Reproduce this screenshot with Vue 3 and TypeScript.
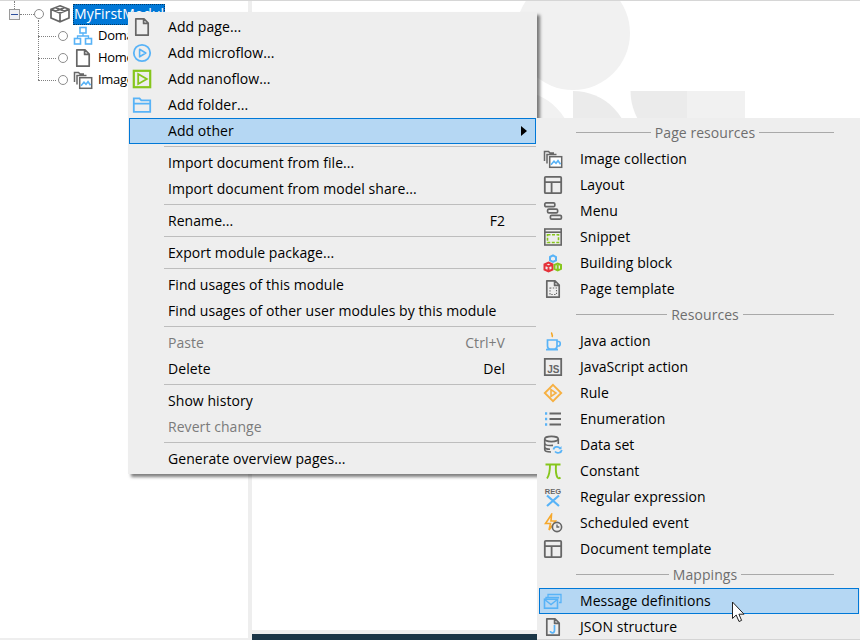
<script setup lang="ts">
type Row = { label?: string; icon?: string; key?: string; off?: boolean; hot?: boolean; arrow?: boolean; sep?: boolean; head?: string };

const g = '#666666';
const b = '#58b3f7';
const page = `<path d="M3.8 1.8H12L16.2 6V18.2H3.8Z M11.6 2V6.4H16" fill="none" stroke="${g}" stroke-width="1.7" stroke-linejoin="round"/>`;
const layout = `<rect x="1.8" y="1.8" width="16.4" height="16.4" rx="1" fill="none" stroke="${g}" stroke-width="1.8"/><path d="M2 7.2H18M8.6 7.2V18" stroke="${g}" stroke-width="1.8" fill="none"/>`;
const images = `<path d="M1.5 12V2.5H5.5L7 4H11M4 14.5V5.5H13.5" fill="none" stroke="${g}" stroke-width="1.5"/><rect x="6.7" y="7.7" width="12" height="10.6" fill="#fff" stroke="${g}" stroke-width="1.5"/><path d="M8 15.7L11 12.2L13 14.2L15 11.7L17.5 15.2" fill="none" stroke="${b}" stroke-width="1.6"/>`;
const icons: Record<string, string> = {
  page,
  layout,
  images,
  microflow: `<circle cx="10" cy="10" r="8.2" fill="none" stroke="${b}" stroke-width="1.8"/><path d="M7.6 6.2L13.8 10L7.6 13.8Z" fill="none" stroke="${b}" stroke-width="1.6" stroke-linejoin="round"/>`,
  nanoflow: `<rect x="1.8" y="1.8" width="16.4" height="16.4" fill="none" stroke="#86c61c" stroke-width="2.2"/><path d="M6.2 5L14.8 10L6.2 15Z" fill="none" stroke="#86c61c" stroke-width="1.8"/>`,
  folder: `<path d="M1.8 16.8V3.4H7.5L9.3 5.4H18.2V16.8Z M2 8.6H18" fill="none" stroke="${b}" stroke-width="1.8"/>`,
  menu: `<rect x="1.8" y="1.9" width="10" height="3.8" rx="1.2" fill="none" stroke="${g}" stroke-width="1.7"/><rect x="4.6" y="8.1" width="10" height="3.8" rx="1.2" fill="none" stroke="${g}" stroke-width="1.7"/><rect x="7.4" y="14.3" width="11" height="3.8" rx="1.2" fill="none" stroke="${g}" stroke-width="1.7"/>`,
  snippet: `<rect x="1.8" y="2" width="16.4" height="16" fill="none" stroke="${g}" stroke-width="1.6"/><path d="M2 5.2H18" stroke="${g}" stroke-width="1.6"/><rect x="4.5" y="7.7" width="11" height="7.8" fill="none" stroke="#86c61c" stroke-width="1.6" stroke-dasharray="3 1.5"/>`,
  block: `<path d="M7 4L10 2.4L13 4V7.5L10 9L7 7.5Z" fill="none" stroke="${b}" stroke-width="2"/><path d="M1.5 11.5L5.5 9.6L9.5 11.5V16.5L5.5 18.4L1.5 16.5ZM1.5 11.7L5.5 13.5L9.5 11.7M5.5 13.5V18" fill="none" stroke="#e5323a" stroke-width="2"/><path d="M11.5 12L14.7 10.5L18 12V15.8L14.7 17.3L11.5 15.8ZM14.7 12V17" fill="none" stroke="#86c61c" stroke-width="2"/>`,
  template: `${page}<rect x="7" y="9" width="6.5" height="6.5" fill="none" stroke="${g}" stroke-width="1.1" stroke-dasharray="1.4 1.4"/>`,
  java: `<path d="M9 1.5C7.5 3 10.5 3.8 9 6" fill="none" stroke="#f5a623" stroke-width="1.6"/><path d="M4.5 9H14V15C14 17 13 18 11.5 18H7C5.5 18 4.5 17 4.5 15Z M14 10.5H15.5C17.8 10.5 17.8 15 15.5 15H14 M3 18.7H15" fill="none" stroke="${b}" stroke-width="1.7"/>`,
  js: `<path d="M1.8 1.8H18.2V18.2H1.8Z" fill="none" stroke="${g}" stroke-width="1.8"/><text x="16.5" y="16" text-anchor="end" font-family="Liberation Sans" font-weight="700" font-size="10" fill="${g}">JS</text>`,
  rule: `<path d="M10 1.8L18.2 10L10 18.2L1.8 10Z" fill="none" stroke="#f6b042" stroke-width="1.9"/><path d="M8 6.6L13 10L8 13.4Z" fill="none" stroke="#f6b042" stroke-width="1.6"/>`,
  enum: `<path d="M2 4.5H4.2M2 10H4.2M2 15.5H4.2" stroke="${b}" stroke-width="2.4" fill="none"/><path d="M6.5 4.5H18M6.5 10H18M6.5 15.5H18" stroke="${g}" stroke-width="1.8" fill="none"/>`,
  dataset: `<ellipse cx="8.5" cy="4" rx="6.8" ry="2.6" fill="none" stroke="${g}" stroke-width="1.6"/><path d="M1.7 4V14.5C1.7 16 4.5 17 8 17M1.7 8C2 10 6 10.8 10 10.4M1.7 12C2 13.6 4.5 14.3 7 14.3M15.3 4V9" fill="none" stroke="${g}" stroke-width="1.6"/><path d="M10.5 14.5C11 11.5 15.5 11 17 13.5M18.8 15C18.3 18 14 18.8 12 16.5" fill="none" stroke="${b}" stroke-width="1.7"/><path d="M18.5 11V14.2H15.5Z" fill="${b}"/>`,
  constant: `<path d="M2.5 3.5H17.5M7 3.5C7 9 6.5 14 4 17.5M13 3.5C12.6 9 13 14 14.5 16.5C15.3 17.6 16.5 17.3 17.5 16.5" fill="none" stroke="#86c61c" stroke-width="1.9"/>`,
  regex: `<text x="10" y="6.6" text-anchor="middle" font-family="Liberation Sans" font-weight="700" font-size="7.5" fill="${g}">REG</text><path d="M4 8.5L16 19M16 8.5L4 19" stroke="${b}" stroke-width="2.2" fill="none"/>`,
  event: `<path d="M8.5 1.5L2.5 10.5H7.5L6 17L12.5 8H8L8.5 1.5Z" fill="none" stroke="#f6a92e" stroke-width="1.6"/><circle cx="14" cy="14" r="4.6" fill="#eee" stroke="${g}" stroke-width="1.6"/><path d="M14 11.5V14H16.3" fill="none" stroke="${g}" stroke-width="1.3"/>`,
  message: `<path d="M5 6V3.5H18V11.5H16M3 9V6.5H15.5V7.5" fill="none" stroke="${b}" stroke-width="1.3"/><rect x="1.5" y="8.2" width="13" height="9" fill="none" stroke="${b}" stroke-width="1.6"/><path d="M2 8.8L8 13.5L14 8.8" fill="none" stroke="${b}" stroke-width="1.4"/>`,
  json: `${page}<path d="M11.5 8V13.5C11.5 16.5 7.5 16.5 7.5 14" fill="none" stroke="${b}" stroke-width="1.7"/>`,
  module: `<path d="M10 1.8L19 5.3V14L10 17.8L1 14V5.3ZM1.2 5.4L10 9L18.8 5.4M10 9V17.5M5.5 3.6L14.5 7.2M14.5 3.6L5.5 7.2" fill="none" stroke="${g}" stroke-width="1.7"/>`,
  domain: `<rect x="7" y="1.5" width="6" height="5.5" fill="none" stroke="${b}" stroke-width="1.6"/><rect x="1.5" y="12.5" width="6" height="5.5" fill="none" stroke="${b}" stroke-width="1.6"/><rect x="12.5" y="12.5" width="6" height="5.5" fill="none" stroke="${b}" stroke-width="1.6"/><path d="M10 7V10M4.5 12.5V10H15.5V12.5" fill="none" stroke="${b}" stroke-width="1.3"/>`,
};

const mainMenu: Row[] = [
  { label: 'Add page...', icon: 'page' },
  { label: 'Add microflow...', icon: 'microflow' },
  { label: 'Add nanoflow...', icon: 'nanoflow' },
  { label: 'Add folder...', icon: 'folder' },
  { label: 'Add other', hot: true, arrow: true },
  { sep: true },
  { label: 'Import document from file...' },
  { label: 'Import document from model share...' },
  { sep: true },
  { label: 'Rename...', key: 'F2' },
  { sep: true },
  { label: 'Export module package...' },
  { sep: true },
  { label: 'Find usages of this module' },
  { label: 'Find usages of other user modules by this module' },
  { sep: true },
  { label: 'Paste', key: 'Ctrl+V', off: true },
  { label: 'Delete', key: 'Del' },
  { sep: true },
  { label: 'Show history' },
  { label: 'Revert change', off: true },
  { sep: true },
  { label: 'Generate overview pages...' },
];

const subMenu: Row[] = [
  { head: 'Page resources' },
  { label: 'Image collection', icon: 'images' },
  { label: 'Layout', icon: 'layout' },
  { label: 'Menu', icon: 'menu' },
  { label: 'Snippet', icon: 'snippet' },
  { label: 'Building block', icon: 'block' },
  { label: 'Page template', icon: 'template' },
  { head: 'Resources' },
  { label: 'Java action', icon: 'java' },
  { label: 'JavaScript action', icon: 'js' },
  { label: 'Rule', icon: 'rule' },
  { label: 'Enumeration', icon: 'enum' },
  { label: 'Data set', icon: 'dataset' },
  { label: 'Constant', icon: 'constant' },
  { label: 'Regular expression', icon: 'regex' },
  { label: 'Scheduled event', icon: 'event' },
  { label: 'Document template', icon: 'layout' },
  { head: 'Mappings' },
  { label: 'Message definitions', icon: 'message', hot: true },
  { label: 'JSON structure', icon: 'json' },
];

const children = [
  { label: 'Domain model', icon: 'domain' },
  { label: 'Homepage', icon: 'page' },
  { label: 'Images', icon: 'images' },
];
</script>

<template>
  <div class="app">
    <aside class="tree">
      <div class="root-stem"></div>
      <div class="child-stem"></div>
      <div class="row root">
        <span class="expander"></span>
        <span class="dots root-dots"></span>
        <span class="radio"></span>
        <svg class="ico" viewBox="0 0 20 20" v-html="icons.module"></svg>
        <span class="selected">MyFirstModule</span>
      </div>
      <div v-for="c in children" :key="c.label" class="row child">
        <span class="dots child-dots"></span>
        <span class="radio"></span>
        <svg class="ico child-ico" viewBox="0 0 20 20" v-html="icons[c.icon]"></svg>
        <span class="child-label">{{ c.label }}</span>
      </div>
    </aside>

    <main class="canvas">
      <svg class="mark" width="608" height="118" viewBox="252 0 608 118">
        <circle cx="573" cy="33" r="57" fill="#f1f1f1" />
        <circle cx="516" cy="148" r="57" fill="#f1f1f1" />
        <path d="M573 91A57 57 0 0 1 630 148H573Z" fill="#ebebeb" />
        <path d="M630.5 91H687V148A57 57 0 0 1 630.5 91Z" fill="#ebebeb" />
        <rect x="687" y="91" width="58" height="27" fill="#f1f1f1" />
      </svg>
      <div class="page"></div>
      <div class="footer"></div>
    </main>

    <nav class="menu">
      <template v-for="(m, i) in mainMenu" :key="i">
        <div v-if="m.sep" class="sep"></div>
        <div v-else class="item" :class="{ hot: m.hot, off: m.off }">
          <svg v-if="m.icon" class="ico" viewBox="0 0 20 20" v-html="icons[m.icon]"></svg>
          <span class="text">{{ m.label }}</span>
          <span v-if="m.key" class="key">{{ m.key }}</span>
          <span v-if="m.arrow" class="arrow"></span>
        </div>
      </template>
    </nav>

    <nav class="menu sub">
      <template v-for="(m, i) in subMenu" :key="i">
        <div v-if="m.head" class="head"><i></i><span>{{ m.head }}</span><i></i></div>
        <div v-else class="item" :class="{ hot: m.hot }">
          <svg v-if="m.icon" class="ico" viewBox="0 0 20 20" v-html="icons[m.icon]"></svg>
          <span class="text">{{ m.label }}</span>
        </div>
      </template>
    </nav>

    <svg class="cursor" width="18" height="24" viewBox="0 0 18 24">
      <path d="M1.5 1V17.5L5.2 14L8 20.5L10.6 19.4L7.9 13.2H13Z" fill="#fff" stroke="#222" stroke-width="1" />
    </svg>
  </div>
</template>

<style>
html, body { margin: 0; padding: 0; background: #fff; }
</style>

<style scoped>
.app {
  position: relative;
  width: 860px;
  height: 640px;
  overflow: hidden;
  display: flex;
  background: #eeeeee;
  font-family: "Open Sans", "Noto Sans", sans-serif;
  font-size: 14px;
  letter-spacing: 0.06px;
  color: #000;
  box-sizing: border-box;
  border-top: 1px solid #d6d6d6;
}
.tree {
  position: relative;
  width: 248px;
  height: 637px;
  padding-top: 2px;
  box-sizing: border-box;
  background: #fff;
  flex: none;
}
.row { height: 22px; display: flex; align-items: center; white-space: nowrap; }
.root { padding-left: 9px; }
.child { padding-left: 38px; }
.expander {
  position: relative;
  width: 11px;
  height: 11px;
  box-sizing: border-box;
  border: 1px solid #9a9a9a;
  background: #eef0f4;
  flex: none;
}
.expander::after {
  content: "";
  position: absolute;
  left: 1px;
  right: 1px;
  top: 4px;
  height: 1px;
  background: #2c4f9e;
}
.dots { border-top: 1px dotted #808080; flex: none; }
.root-dots { width: 14px; }
.child-dots { width: 18px; margin-right: 2px; }
.radio {
  width: 10px;
  height: 10px;
  box-sizing: border-box;
  border: 1.5px solid #8c8c8c;
  border-radius: 50%;
  flex: none;
}
.ico { width: 20px; height: 20px; flex: none; display: block; }
.root .ico { margin-left: 6px; }
.child-ico { margin-left: 5px; }
.child-label { margin-left: 5px; margin-bottom: 2px; font-size: 13px; letter-spacing: -0.3px; }
.selected {
  margin-left: 3px;
  height: 21px;
  line-height: 19px;
  padding: 0 1px;
  box-sizing: border-box;
  background: #0078d7;
  color: #fff;
  outline: 1px dotted #003c6c;
  outline-offset: -1px;
  width: 92px;
}
.root-stem {
  position: absolute;
  left: 14px;
  top: 0;
  height: 8px;
  border-left: 1px dotted #808080;
}
.child-stem {
  position: absolute;
  left: 38px;
  top: 19px;
  height: 60px;
  border-left: 1px dotted #808080;
}
.canvas {
  position: relative;
  flex: 1;
  margin-left: 4px;
  display: flex;
  flex-direction: column;
}
.mark { position: absolute; z-index: 1; left: 0; top: -1px; }
.page { flex: 1; background: #fff; }
.footer { height: 6px; margin-top: 4px; background: #1b3647; }
.menu {
  position: absolute;
  z-index: 2;
  left: 128px;
  top: 11px;
  width: 409px;
  box-sizing: border-box;
  padding: 2px 1px;
  background: #eeeeee;
  box-shadow: 3px 3px 3px rgba(0, 0, 0, 0.5);
}
.sub {
  z-index: 3;
  left: 537px;
  top: 117px;
  width: 323px;
  height: 522px;
  padding: 2px 1px 0 2px;
  overflow: hidden;
  box-shadow: inset 0 -1px 0 #d4d4d4;
}
.item {
  position: relative;
  height: 26px;
  box-sizing: border-box;
  display: flex;
  align-items: center;
  border: 1px solid transparent;
  padding: 0 30px 2px 38px;
  white-space: nowrap;
}
.menu .item > .ico { position: absolute; left: 2px; top: 2px; }
.sub .item { padding-left: 40px; }
.sub .item > .ico { left: 3px; }
.item.hot { background: #b5d7f3; border-color: #0078d7; }
.item.off { color: #7b7b7b; }
.text { flex: 1; }
.arrow {
  position: absolute;
  right: 8px;
  top: 7px;
  width: 0;
  height: 0;
  border-left: 6px solid #000;
  border-top: 5px solid transparent;
  border-bottom: 5px solid transparent;
}
.sep { height: 1px; margin: 2px 0 3px 35px; background: #bdbdbd; }
.head {
  height: 26px;
  box-sizing: border-box;
  padding-bottom: 2px;
  display: flex;
  align-items: center;
  gap: 4px;
  margin: 0 25px 0 37px;
  color: #6e6e6e;
}
.head i { flex: 1; height: 1px; background: #a9a9a9; }
.cursor { position: absolute; z-index: 4; left: 731px; top: 600px; }
</style>
